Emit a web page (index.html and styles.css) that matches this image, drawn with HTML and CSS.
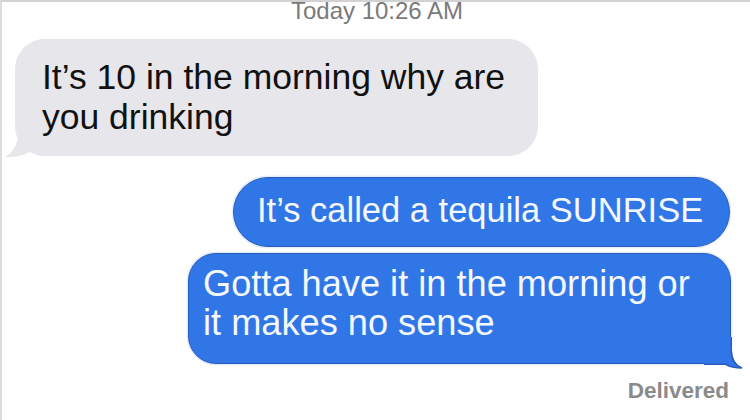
FILE: index.html
```html
<!DOCTYPE html>
<html>
<head>
<meta charset="utf-8">
<link rel="stylesheet" href="styles.css">
</head>
<body>
<div class="screen">
  <div class="stamp">Today 10:26 AM</div>
  <div class="bubble gray">
    It’s 10 in the morning why are<br>you drinking
    <svg class="tail tail-left" width="34" height="30" viewBox="0 0 34 30"><path d="M14 0 C14 12 10 22 0 28 C10 29 20 26 28 21 L34 0 Z" fill="#e6e6eb"/></svg>
  </div>
  <div class="bubble blue one">It’s called a tequila SUNRISE</div>
  <div class="bubble blue two">
    Gotta have it in the morning or<br>it makes no sense
    <svg class="tail tail-right" width="40" height="34" viewBox="0 0 40 34"><path d="M0 0 H28 V13 C28 22 32 28 38 31 C32 31 26 30 21 27 C17 28 10 28 0 28 Z" fill="#3176e6"/><path d="M27.25 0 V13 C27.25 22 31.5 28.5 38 31 C32 31 26 30 21 27 C17 27.25 10 27.25 0 27.25" fill="none" stroke="#2a5cbf" stroke-width="1.5"/></svg>
  </div>
  <div class="delivered">Delivered</div>
</div>
</body>
</html>
```
FILE: styles.css
```css
html, body {
  margin: 0;
  padding: 0;
  background: #ffffff;
}
.screen {
  width: 750px;
  height: 420px;
  box-sizing: border-box;
  border-top: 2px solid #d2d2d2;
  border-left: 2px solid #dcdcdc;
  overflow: hidden;
  display: flex;
  flex-direction: column;
  font-family: "Liberation Sans", Arial, sans-serif;
}
.stamp {
  height: 20px;
  line-height: 20px;
  margin-top: -1px;
  text-align: center;
  font-size: 24px;
  color: #7a7a7a;
  padding-left: 2px;
}
.bubble {
  position: relative;
  box-sizing: border-box;
}
.gray {
  margin-top: 18px;
  margin-left: 13px;
  width: 523px;
  height: 117px;
  padding: 18px 0 0 27px;
  background: #e6e6eb;
  border-radius: 30px;
  color: #111111;
  font-size: 35.5px;
  line-height: 40px;
}
.blue {
  align-self: flex-end;
  background: #3176e6;
  border: 1.5px solid #2a5cbf;
  box-shadow: 0 0 0 1.5px #e6eefc;
  color: #f4f8ff;
  font-size: 34.5px;
}
.one {
  margin-top: 21px;
  margin-right: 20px;
  width: 497px;
  height: 70px;
  border-radius: 35px;
  padding: 12px 0 0 23px;
  line-height: 40px;
}
.two {
  margin-top: 6px;
  margin-right: 19px;
  width: 543px;
  height: 111px;
  border-radius: 28px;
  padding: 10px 0 0 14px;
  line-height: 39px;
  font-size: 36.2px;
}
.tail {
  position: absolute;
}
.tail-left {
  left: -10px;
  bottom: -3px;
}
.tail-right {
  right: -13.5px;
  bottom: -7.5px;
}
.delivered {
  align-self: flex-end;
  margin-top: 15px;
  margin-right: 21px;
  font-size: 22.5px;
  font-weight: bold;
  color: #8a8a8a;
  line-height: 24px;
}
```
